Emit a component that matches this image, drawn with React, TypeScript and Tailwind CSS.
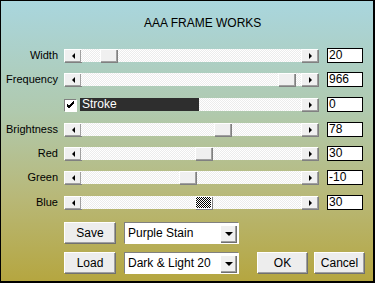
import React from 'react';

const font = { fontFamily: '"Liberation Sans", Arial, sans-serif' };

const ArrowBtn = ({ dir }: { dir: 'l' | 'r' }) => (
  <div className="w-[17px] h-[13px] bg-[#f0f0f0] border-t border-l border-white shadow-[inset_-1px_-1px_0_#a0a0a0,1px_1px_0_#808080] flex items-center justify-center shrink-0">
    {dir === 'l' ? (
      <div className="w-0 h-0 border-y-[3px] border-y-transparent border-r-[3px] border-r-black" />
    ) : (
      <div className="w-0 h-0 border-y-[3px] border-y-transparent border-l-[3px] border-l-black" />
    )}
  </div>
);

const Track = ({ thumb, checked }: { thumb?: number; checked?: boolean }) => (
  <div className="relative flex-1 h-[13px] bg-[repeating-conic-gradient(#ececec_0_25%,#ffffff_0_50%)] bg-size-[2px_2px]">
    {thumb !== undefined && (
      <div
        className={
          checked
            ? 'absolute top-0 w-[17px] h-[13px] bg-[repeating-conic-gradient(#000_0_25%,#fff_0_50%)] bg-size-[2px_2px] border border-white shadow-[1px_1px_0_#808080]'
            : 'absolute top-0 w-[17px] h-[13px] bg-[#f0f0f0] border-t border-l border-white shadow-[inset_-1px_-1px_0_#a0a0a0,1px_1px_0_#808080]'
        }
        style={{ left: thumb }}
      />
    )}
  </div>
);

const ValueBox = ({ v }: { v: string }) => (
  <div className="ml-[9px] w-[36px] h-[15px] bg-white border border-black text-[12px] leading-[13px] pl-[1px] text-black">
    {v}
  </div>
);

const Row = ({ label, thumb, value, mt, checked }: { label: string; thumb: number; value: string; mt: string; checked?: boolean }) => (
  <div className={`flex items-center ${mt}`}>
    <div className="w-[57px] text-right text-[11px] leading-[13px] text-black">{label}</div>
    <div className="ml-[6px] w-[254px] flex items-center">
      <ArrowBtn dir="l" />
      <Track thumb={thumb} checked={checked} />
      <ArrowBtn dir="r" />
    </div>
    <ValueBox v={value} />
  </div>
);

const Button = ({ children, w }: { children: React.ReactNode; w: string }) => (
  <div className={`${w} h-[21px] bg-[#ededed] border-t border-l border-white shadow-[inset_-1px_-1px_0_#a0a0a0,1px_1px_0_#707070] flex items-center justify-center text-[12px] text-black`}>
    {children}
  </div>
);

const Select = ({ text }: { text: string }) => (
  <div className="w-[114px] h-[21px] bg-white border-t border-l border-[#808080] shadow-[1px_1px_0_#ffffff] flex items-center justify-between pl-[3px] pr-[2px] text-[12px] text-black">
    <span>{text}</span>
    <div className="w-[16px] h-[17px] bg-[#f0f0f0] border-t border-l border-white shadow-[inset_-1px_-1px_0_#a0a0a0,1px_1px_0_#707070] flex items-center justify-center">
      <div className="w-0 h-0 border-x-[4px] border-x-transparent border-t-[4px] border-t-black" />
    </div>
  </div>
);

export default function App() {
  return (
    <div
      style={font}
      className="w-[375px] h-[283px] border border-black border-r-2 border-b-2 bg-[linear-gradient(to_bottom,#a9d6de_0%,#b0c9ad_40%,#b8b878_70%,#b5a640_100%)] overflow-hidden"
    >
      <div className="pt-[15px] pl-[143px] text-[12px] text-black leading-[14px]">AAA FRAME WORKS</div>

      <div className="mt-[18px]">
        <Row label="Width" thumb={19} value="20" mt="mt-0" />
        <Row label="Frequency" thumb={197} value="966" mt="mt-[9px]" />
        <div className="flex items-center mt-[10px]">
          <div className="w-[57px]" />
          <div className="ml-[6px] w-[254px] flex items-center">
            <div className="w-[12px] h-[12px] bg-white border-t border-l border-[#808080] shadow-[1px_1px_0_#fff] flex items-center justify-center">
              <svg width="9" height="8" viewBox="0 0 9 8">
                <path d="M1 3 L3 5 L8 0 M1 4 L3 6 L8 1 M1 5 L3 7 L8 2" stroke="#000" strokeWidth="1" fill="none" />
              </svg>
            </div>
            <div className="ml-[4px] w-[119px] h-[13px] bg-[#2e2e2e] text-white text-[12px] leading-[13px] pl-[2px]">Stroke</div>
            <Track />
            <ArrowBtn dir="r" />
          </div>
          <ValueBox v="0" />
        </div>
        <Row label="Brightness" thumb={133} value="78" mt="mt-[10px]" />
        <Row label="Red" thumb={114} value="30" mt="mt-[9px]" />
        <Row label="Green" thumb={98} value="-10" mt="mt-[9px]" />
        <Row label="Blue" thumb={114} value="30" mt="mt-[10px]" checked />
      </div>

      <div className="flex items-center mt-[12px] pl-[63px]">
        <Button w="w-[51px]">Save</Button>
        <div className="ml-[9px]">
          <Select text="Purple Stain" />
        </div>
      </div>
      <div className="flex items-center mt-[9px] pl-[63px]">
        <Button w="w-[51px]">Load</Button>
        <div className="ml-[9px]">
          <Select text="Dark & Light 20" />
        </div>
        <div className="ml-[19px]">
          <Button w="w-[50px]">OK</Button>
        </div>
        <div className="ml-[7px]">
          <Button w="w-[50px]">Cancel</Button>
        </div>
      </div>
    </div>
  );
}
